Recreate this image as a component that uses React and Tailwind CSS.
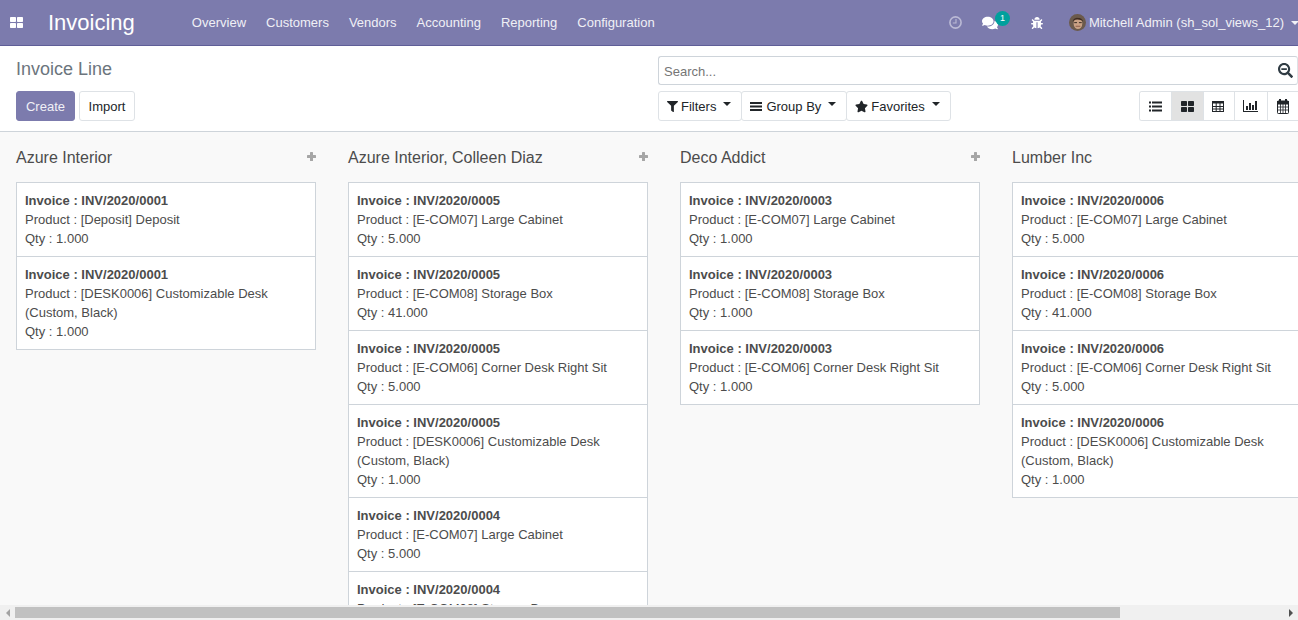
import React from "react";
import { FaComments, FaBug, FaSearchMinus, FaFilter, FaStar } from "react-icons/fa";

const P = {
  d1: "[DESK0006] Customizable Desk (Custom, Black)",
  c7: "[E-COM07] Large Cabinet",
  c8: "[E-COM08] Storage Box",
  c6: "[E-COM06] Corner Desk Right Sit",
};
const cols = [
  { name: "Azure Interior", cards: [["0001", "[Deposit] Deposit", "1.000"], ["0001", P.d1, "1.000"]] },
  { name: "Azure Interior, Colleen Diaz", cards: [["0005", P.c7, "5.000"], ["0005", P.c8, "41.000"], ["0005", P.c6, "5.000"], ["0005", P.d1, "1.000"], ["0004", P.c7, "5.000"], ["0004", P.c8, "41.000"]] },
  { name: "Deco Addict", cards: [["0003", P.c7, "1.000"], ["0003", P.c8, "1.000"], ["0003", P.c6, "1.000"]] },
  { name: "Lumber Inc", cards: [["0006", P.c7, "5.000"], ["0006", P.c8, "41.000"], ["0006", P.c6, "5.000"], ["0006", P.d1, "1.000"]] },
];

const Caret = ({ className = "" }) => (
  <span className={`inline-block w-0 h-0 border-x-[4px] border-x-transparent border-t-[4px] border-t-current ${className}`} />
);

const ThLarge = ({ className = "" }) => (
  <svg viewBox="0 0 13 11" className={`w-[13px] h-[11px] ${className}`} fill="currentColor">
    <rect x="0" y="0" width="6" height="5" rx="0.7" />
    <rect x="7" y="0" width="6" height="5" rx="0.7" />
    <rect x="0" y="6" width="6" height="5" rx="0.7" />
    <rect x="7" y="6" width="6" height="5" rx="0.7" />
  </svg>
);

const BarsIcon = () => (
  <svg viewBox="0 0 12 9" className="w-[12px] h-[9px]" fill="currentColor">
    <rect x="0" y="0" width="12" height="2" />
    <rect x="0" y="3.5" width="12" height="2" />
    <rect x="0" y="7" width="12" height="2" />
  </svg>
);

const ListIcon = () => (
  <svg viewBox="0 0 13 11" className="w-[13px] h-[11px]" fill="currentColor">
    <rect x="0" y="0.5" width="2" height="2" />
    <rect x="0" y="4.5" width="2" height="2" />
    <rect x="0" y="8.5" width="2" height="2" />
    <rect x="3" y="0.5" width="10" height="2" />
    <rect x="3" y="4.5" width="10" height="2" />
    <rect x="3" y="8.5" width="10" height="2" />
  </svg>
);

const TableIcon = () => (
  <svg viewBox="0 0 12 11" className="w-[12px] h-[11px]" fill="none" stroke="currentColor" strokeWidth="1">
    <rect x="0.5" y="0.5" width="11" height="10" strokeWidth="1" />
    <path d="M0 1.5H12" strokeWidth="2" />
    <path d="M0 5.5H12M0 8H12M4.2 2V11M8 2V11" />
  </svg>
);

const ChartIcon = () => (
  <svg viewBox="0 0 15 12" className="w-[15px] h-[12px]" fill="currentColor">
    <rect x="0" y="0" width="1" height="12" />
    <rect x="0" y="11" width="15" height="1" />
    <rect x="3" y="6" width="2" height="4" />
    <rect x="6" y="3" width="2" height="7" />
    <rect x="9" y="5" width="2" height="5" />
    <rect x="12" y="1" width="2" height="9" />
  </svg>
);

const CalendarIcon = () => (
  <svg viewBox="0 0 12 15" className="w-[12px] h-[15px]" fill="none" stroke="currentColor">
    <rect x="0.5" y="2" width="11" height="12.5" rx="0.8" />
    <rect x="0" y="2" width="12" height="3.5" fill="currentColor" stroke="none" />
    <rect x="2" y="0" width="2" height="3.5" fill="currentColor" stroke="none" />
    <rect x="8" y="0" width="2" height="3.5" fill="currentColor" stroke="none" />
    <path d="M0 8H12M0 11H12M3.5 5V15M6 5V15M8.5 5V15" strokeWidth="0.8" />
  </svg>
);

const ClockIcon = () => (
  <svg viewBox="0 0 13 13" className="w-[13px] h-[13px] text-[#bbbad5]" fill="none" stroke="currentColor">
    <circle cx="6.5" cy="6.5" r="5.6" strokeWidth="1.6" />
    <path d="M7 3V7H3.8" strokeWidth="1.1" />
  </svg>
);

const PlusIcon = () => (
  <svg viewBox="0 0 9 9" className="w-[9px] h-[9px] text-[#a6a6a6]" fill="currentColor">
    <rect x="3" y="0" width="3" height="9" rx="0.5" />
    <rect x="0" y="3" width="9" height="3" rx="0.5" />
  </svg>
);

function Card({ inv, product, qty }) {
  return (
    <div className="bg-white border border-[#ced4da] -mt-px first:mt-0 pt-[8px] pb-[8px] px-[8px] leading-[19px] text-[13px] text-[#4c4c4c]">
      <div className="font-bold">Invoice : INV/2020/{inv}</div>
      <div>Product : {product}</div>
      <div>Qty : {qty}</div>
    </div>
  );
}

function Column({ name, cards }) {
  return (
    <div className="w-[300px] shrink-0">
      <div className="h-[50px] flex items-center justify-between pt-[1px]">
        <span className="text-[16px] text-[#4c4c4c]">{name}</span>
        <span className="mb-[2px]"><PlusIcon /></span>
      </div>
      <div>
        {cards.map((c, i) => <Card key={i} inv={c[0]} product={c[1]} qty={c[2]} />)}
      </div>
    </div>
  );
}

function Btn({ icon, label, gap = "ml-[3px]", className = "" }) {
  return (
    <button className={`h-[30px] bg-white border border-[#dee2e6] rounded-[3px] flex items-center pl-[8px] pr-[10px] text-[13px] text-[#212529] ${className}`}>
      {icon}<span className={`${gap} pt-[1px]`}>{label}</span><Caret className="ml-[7px] mb-[4px]" />
    </button>
  );
}

const ViewBtn = ({ children, active, width, pad = "" }) => (
  <div className={`h-full ${width} ${pad} shrink-0 flex items-center justify-center border-r border-[#dee2e6] text-[#212529] ${active ? "bg-[#e2e2e2]" : "bg-white"}`}>{children}</div>
);

export default function App() {
  return (
    <div className="w-[1298px] h-[620px] overflow-hidden flex flex-col bg-white font-['Liberation_Sans',Arial,sans-serif]">
      <header className="h-[46px] shrink-0 bg-[#7c7bad] border-b border-[#5f5e97] flex items-center text-white">
        <ThLarge className="ml-[10px]" />
        <span className="ml-[25px] text-[22px] leading-none">Invoicing</span>
        <nav className="ml-[57px] flex gap-[20px] text-[13px] text-[#f0f0f6]">
          {["Overview", "Customers", "Vendors", "Accounting", "Reporting", "Configuration"].map((t) => <span key={t}>{t}</span>)}
        </nav>
        <div className="ml-auto flex items-center">
          <ClockIcon />
          <div className="relative ml-[20px]">
            <FaComments className="w-[16px] h-[16px] text-white" />
            <span className="absolute -top-[4px] left-[13px] w-[15px] h-[15px] rounded-full bg-[#00a09d] text-white text-[9px] leading-[15px] text-center">1</span>
          </div>
          <FaBug className="ml-[33px] w-[12px] h-[12px] text-white" />
          <svg viewBox="0 0 18 18" className="ml-[26px] w-[17px] h-[17px] rounded-full">
            <rect width="18" height="18" fill="#6b5a4c" />
            <ellipse cx="9.5" cy="10" rx="4.6" ry="6" fill="#c9a185" />
            <path d="M4 8C4 3 14 2 15 8L13 6.5C10 5.5 7 5.5 5.5 6.5Z" fill="#3e2c22" />
            <rect x="5.5" y="8.5" width="3" height="1.2" fill="#4a3a30" />
            <rect x="10.5" y="8.5" width="3" height="1.2" fill="#4a3a30" />
            <path d="M7 13H12" stroke="#8a5a48" strokeWidth="1" />
          </svg>
          <span className="ml-[3px] text-[13px] text-[#f0f0f6]">Mitchell Admin (sh_sol_views_12)</span>
          <Caret className="ml-[7px] mr-[-1px] text-[#f0f0f6]" />
        </div>
      </header>

      <section className="h-[86px] shrink-0 border-b border-[#ced4da] bg-white pl-[16px] flex">
        <div className="w-[642px] shrink-0 flex flex-col">
          <div className="mt-[10px] h-[26px] flex items-center text-[18px] text-[#6c757d]">Invoice Line</div>
          <div className="mt-[9px] flex gap-[4px]">
            <button className="h-[30px] w-[59px] pt-[1px] bg-[#7c7bad] border border-[#7c7bad] rounded-[3px] text-[13px] text-[#f0f0f6]">Create</button>
            <button className="h-[30px] w-[56px] pt-[1px] bg-white border border-[#dee2e6] rounded-[3px] text-[13px] text-[#212529]">Import</button>
          </div>
        </div>
        <div className="flex-1 min-w-0 flex flex-col">
          <div className="mt-[10px] h-[29px] border border-[#ced4da] border-r-[#dee2e6] rounded-[3px] flex items-center justify-between pl-[5px] pr-[4px]">
            <span className="text-[13px] text-[#757575] pt-[2px]">Search...</span>
            <FaSearchMinus className="w-[15px] h-[15px] text-[#2f3b43]" />
          </div>
          <div className="mt-[6px] flex h-[30px]">
            <Btn icon={<FaFilter className="w-[11px] h-[11px]" />} label="Filters" />
            <Btn icon={<BarsIcon />} label="Group By" gap="ml-[4px]" className="-ml-px" />
            <Btn icon={<FaStar className="w-[13px] h-[13px]" />} label="Favorites" className="-ml-px" />
            <div className="ml-auto flex h-[30px] w-[159px] border border-[#dee2e6] border-r-0 rounded-l-[3px] overflow-hidden">
              <ViewBtn width="w-[32px]"><ListIcon /></ViewBtn>
              <ViewBtn width="w-[32px]" active><ThLarge /></ViewBtn>
              <ViewBtn width="w-[31px]" pad="pr-[2px]"><TableIcon /></ViewBtn>
              <ViewBtn width="w-[33px]" pad="pr-[2px]"><ChartIcon /></ViewBtn>
              <ViewBtn width="w-[32px]" pad="pr-[2px]"><CalendarIcon /></ViewBtn>
            </div>
          </div>
        </div>
      </section>

      <main className="flex-1 min-h-0 bg-[#f9f9f9] overflow-hidden flex gap-[32px] pl-[16px]">
        {cols.map((c) => <Column key={c.name} name={c.name} cards={c.cards} />)}
      </main>

      <div className="h-[15px] shrink-0 bg-[#f0f0f0] flex items-center relative">
        <div className="w-[15px] flex justify-center"><span className="w-0 h-0 border-y-[4px] border-y-transparent border-r-[4px] border-r-[#a3a3a3]" /></div>
        <div className="w-[1105px] h-[11px] bg-[#c1c1c1]" />
        <div className="ml-auto w-[15px] flex justify-center"><span className="w-0 h-0 border-y-[4px] border-y-transparent border-l-[4px] border-l-[#505050]" /></div>
      </div>
    </div>
  );
}
